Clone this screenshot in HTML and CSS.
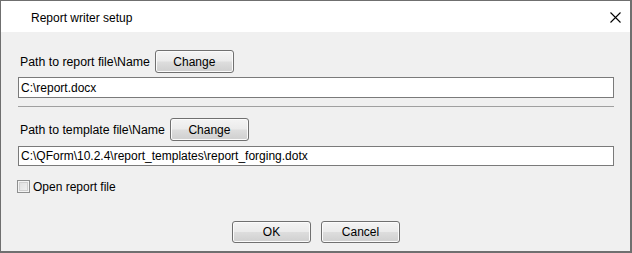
FILE: index.html
```html
<!DOCTYPE html>
<html>
<head>
<meta charset="utf-8">
<link rel="stylesheet" href="styles.css">
</head>
<body>
<div class="window">
  <div class="titlebar">
    <span class="title">Report writer setup</span>
    <svg class="close" width="11" height="11" viewBox="0 0 11 11"><path d="M0.5 0.5 L10.5 10.5 M10.5 0.5 L0.5 10.5" stroke="#000" stroke-width="1.1" fill="none"/></svg>
  </div>
  <div class="content">
    <div class="row row1">
      <span class="label">Path to report file\Name</span>
      <button class="btn">Change</button>
    </div>
    <div class="field field1">C:\report.docx</div>
    <div class="sep"></div>
    <div class="row row2">
      <span class="label">Path to template file\Name</span>
      <button class="btn">Change</button>
    </div>
    <div class="field field2">C:\QForm\10.2.4\report_templates\report_forging.dotx</div>
    <label class="check">
      <span class="box"></span>
      <span class="check-label">Open report file</span>
    </label>
    <div class="actions">
      <button class="btn">OK</button>
      <button class="btn">Cancel</button>
    </div>
  </div>
</div>
</body>
</html>
```
FILE: styles.css
```css
* { box-sizing: border-box; }
html, body { margin: 0; padding: 0; background: #fff; }
body {
  font-family: "Liberation Sans", Arial, sans-serif;
  font-size: 12px;
  color: #000;
}
.window {
  width: 632px;
  height: 253px;
  border: 1px solid #6f6f6f;
  border-right-width: 2px;
  border-bottom-width: 2px;
  display: flex;
  flex-direction: column;
}
.titlebar {
  height: 31px;
  background: #fff;
  display: flex;
  align-items: center;
  justify-content: space-between;
  padding: 0 9px 0 30px;
  flex: none;
}
.title { font-size: 12px; line-height: 14px; margin-top: 2px; }
.close { display: block; margin-top: 1px; }
.content {
  flex: 1;
  background: #f0f0f0;
  padding: 18px 16px 0 17px;
  display: flex;
  flex-direction: column;
}
.row {
  display: flex;
  align-items: center;
  gap: 5px;
  height: 23px;
  padding-left: 2px;
}
.label { font-size: 12.3px; }
.btn {
  font-family: "Liberation Sans", Arial, sans-serif;
  font-size: 12px;
  color: #000;
  width: 79px;
  height: 23px;
  padding: 0;
  border: 1px solid #707070;
  border-radius: 3px;
  background: linear-gradient(#f4f4f4 0%, #ebebeb 48%, #dddddd 52%, #cfcfcf 100%);
  box-shadow: inset 0 0 0 1px #fbfbfb;
}
.field {
  background: #fff;
  border: 1px solid #7a7a7a;
  padding-left: 2px;
  display: flex;
  align-items: center;
}
.field1 { margin-top: 4px; height: 21px; }
.sep {
  height: 1px;
  background: #a0a0a0;
  margin-top: 8px;
}
.row2 { margin-top: 11px; }
.field2 { margin-top: 5px; height: 20px; }
.check {
  display: flex;
  align-items: center;
  margin-top: 14px;
  margin-left: -1px;
  gap: 3px;
  height: 13px;
}
.box {
  width: 13px;
  height: 13px;
  border: 1px solid #8e8f8f;
  background: linear-gradient(135deg, #dcdcdc, #f4f4f4);
  box-shadow: inset 0 0 0 1px #f4f4f4, inset 0 0 0 2px #d0d0d0;
}
.actions {
  display: flex;
  justify-content: center;
  gap: 10px;
  margin-top: 28px;
  margin-left: -17px;
  margin-right: -16px;
  padding-left: 1px;
}
.actions .btn { height: 22px; }
```
